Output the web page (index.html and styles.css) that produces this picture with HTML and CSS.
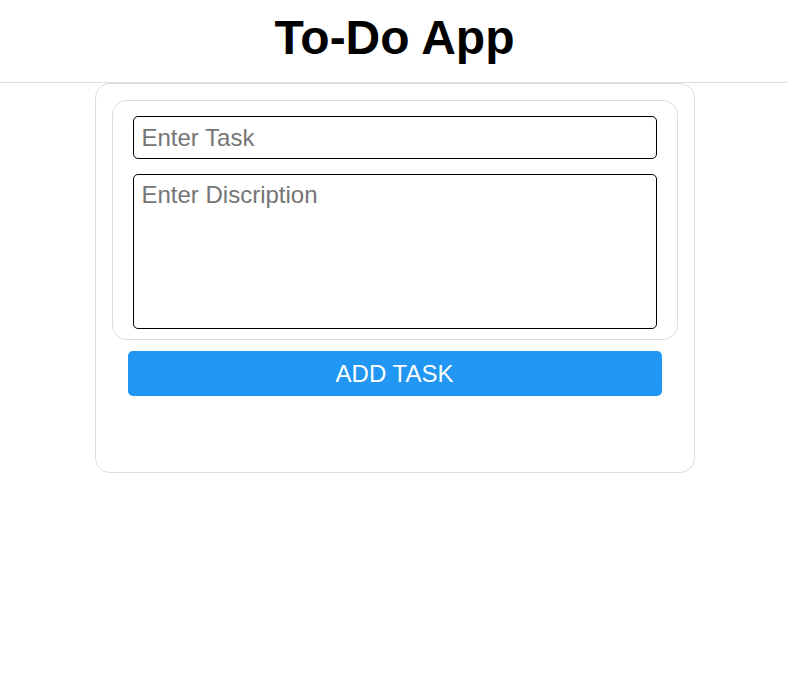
FILE: index.html
```html
<!DOCTYPE html>
<html lang="en">
<head>
<meta charset="utf-8">
<title>To-Do App</title>
<link rel="stylesheet" href="styles.css">
</head>
<body>
<header class="app-header">
  <h1 class="app-title">To-Do App</h1>
</header>
<div class="page">
  <main class="card">
    <form class="task-form">
      <input class="task-input" type="text" placeholder="Enter Task">
      <textarea class="task-desc" placeholder="Enter Discription"></textarea>
    </form>
    <button class="add-btn" type="button">ADD TASK</button>
    <div class="task-list"></div>
  </main>
</div>
</body>
</html>
```
FILE: styles.css
```css
* { box-sizing: border-box; }

body {
  margin: 0;
  font-family: "Liberation Sans", Arial, sans-serif;
  background: #fff;
  color: #000;
}

.app-header {
  height: 83px;
  border-bottom: 1px solid #dddddd;
  padding: 11px 0 0 2px;
  text-align: center;
}

.app-title {
  margin: 0;
  font-size: 48px;
  font-weight: bold;
  line-height: 54px;
}

.page {
  padding-left: 2px;
}

.card {
  width: 600px;
  margin: 0 auto;
  border: 1px solid #dddddd;
  border-radius: 15px;
  padding: 16px;
}

.task-form {
  margin: 0;
  border: 1px solid #dddddd;
  border-radius: 15px;
  padding: 15px 20px 10px;
  display: flex;
  flex-direction: column;
  gap: 15px;
}

.task-input,
.task-desc {
  display: block;
  width: 100%;
  margin: 0;
  border: 1px solid #000;
  border-radius: 5px;
  font-family: "Liberation Sans", Arial, sans-serif;
  font-size: 24px;
  color: #000;
  background: #fff;
  outline: none;
}

.task-input {
  height: 43px;
  padding: 0 8px;
}

.task-desc {
  height: 155px;
  padding: 6px 8px;
  resize: none;
  line-height: normal;
}

.task-input::placeholder,
.task-desc::placeholder {
  color: #757575;
  opacity: 1;
}

.add-btn {
  display: block;
  width: calc(100% - 32px);
  height: 45px;
  margin: 11px 16px 0;
  border: none;
  border-radius: 5px;
  background: #2196f3;
  color: #fff;
  font-family: "Liberation Sans", Arial, sans-serif;
  font-size: 24px;
  padding: 0;
}

.task-list {
  min-height: 60px;
}
```
